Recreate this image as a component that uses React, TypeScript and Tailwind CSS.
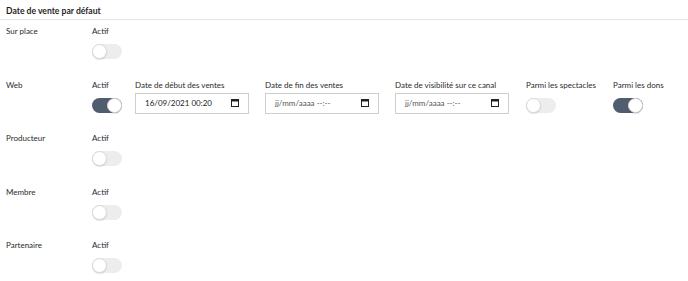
import React from "react";

type Channel = {
  name: string;
  active: boolean;
  extra?: boolean;
};

const channels: Channel[] = [
  { name: "Sur place", active: false },
  { name: "Web", active: true, extra: true },
  { name: "Producteur", active: false },
  { name: "Membre", active: false },
  { name: "Partenaire", active: false },
];

const Toggle = ({ on }: { on: boolean }) => (
  <div
    className={`mt-[6px] relative w-[30px] h-[15px] rounded-full ${
      on ? "bg-[#4f5d6e]" : "bg-[#ededed]"
    }`}
  >
    <div
      className={`absolute top-0 w-[15px] h-[15px] rounded-full bg-white border border-[#d9d9d9] shadow-[0_1px_1px_rgba(0,0,0,0.12)] ${
        on ? "right-0" : "left-0"
      }`}
    ></div>
  </div>
);

const CalendarIcon = () => (
  <svg width="8" height="8" viewBox="0 0 8 8" className="shrink-0">
    <rect x="0.5" y="0.5" width="7" height="7" fill="none" stroke="#222" strokeWidth="1" />
    <rect x="0.5" y="0.5" width="7" height="2" fill="#222" />
  </svg>
);

const DateField = ({
  label,
  value,
  gap = "mr-[16px]",
}: {
  label: string;
  value?: string;
  gap?: string;
}) => (
  <div className={`flex flex-col w-[114px] ${gap}`}>
    <span className="leading-[14px] whitespace-nowrap">{label}</span>
    <div className="mt-[1px] h-[21px] border border-[#cfcfcf] bg-white flex items-center justify-between px-[9px]">
      <span className={`whitespace-nowrap ${value ? "text-[#222]" : "text-[#555]"}`}>
        {value ?? "jj/mm/aaaa --:--"}
      </span>
      <CalendarIcon />
    </div>
  </div>
);

const App = () => {
  return (
    <div
      className="w-[688px] h-[281px] bg-white text-[8px] text-[#2b2b2b] overflow-hidden"
      style={{ fontFamily: "Lato, 'Open Sans', sans-serif" }}
    >
      <div className="pt-[4px] pb-[1px] border-b border-[#e6e6e6]">
        <div className="px-[6px] text-[8.6px] font-bold leading-[14px] text-[#1f1f1f]">
          Date de vente par défaut
        </div>
      </div>

      <div className="mt-[4px] flex flex-col">
        {channels.map((c) => (
          <div key={c.name} className="flex h-[53.5px] px-[6px]">
            <div className="w-[86px] leading-[14px]">{c.name}</div>
            <div className="flex flex-col w-[43px]">
              <span className="leading-[14px]">Actif</span>
              <Toggle on={c.active} />
            </div>
            {c.extra && (
              <>
                <DateField label="Date de début des ventes" value="16/09/2021 00:20" />
                <DateField label="Date de fin des ventes" />
                <DateField label="Date de visibilité sur ce canal" gap="mr-[17px]" />
                <div className="flex flex-col w-[87px]">
                  <span className="leading-[14px] whitespace-nowrap">Parmi les spectacles</span>
                  <Toggle on={false} />
                </div>
                <div className="flex flex-col">
                  <span className="leading-[14px] whitespace-nowrap">Parmi les dons</span>
                  <Toggle on={true} />
                </div>
              </>
            )}
          </div>
        ))}
      </div>
    </div>
  );
};

export default App;
